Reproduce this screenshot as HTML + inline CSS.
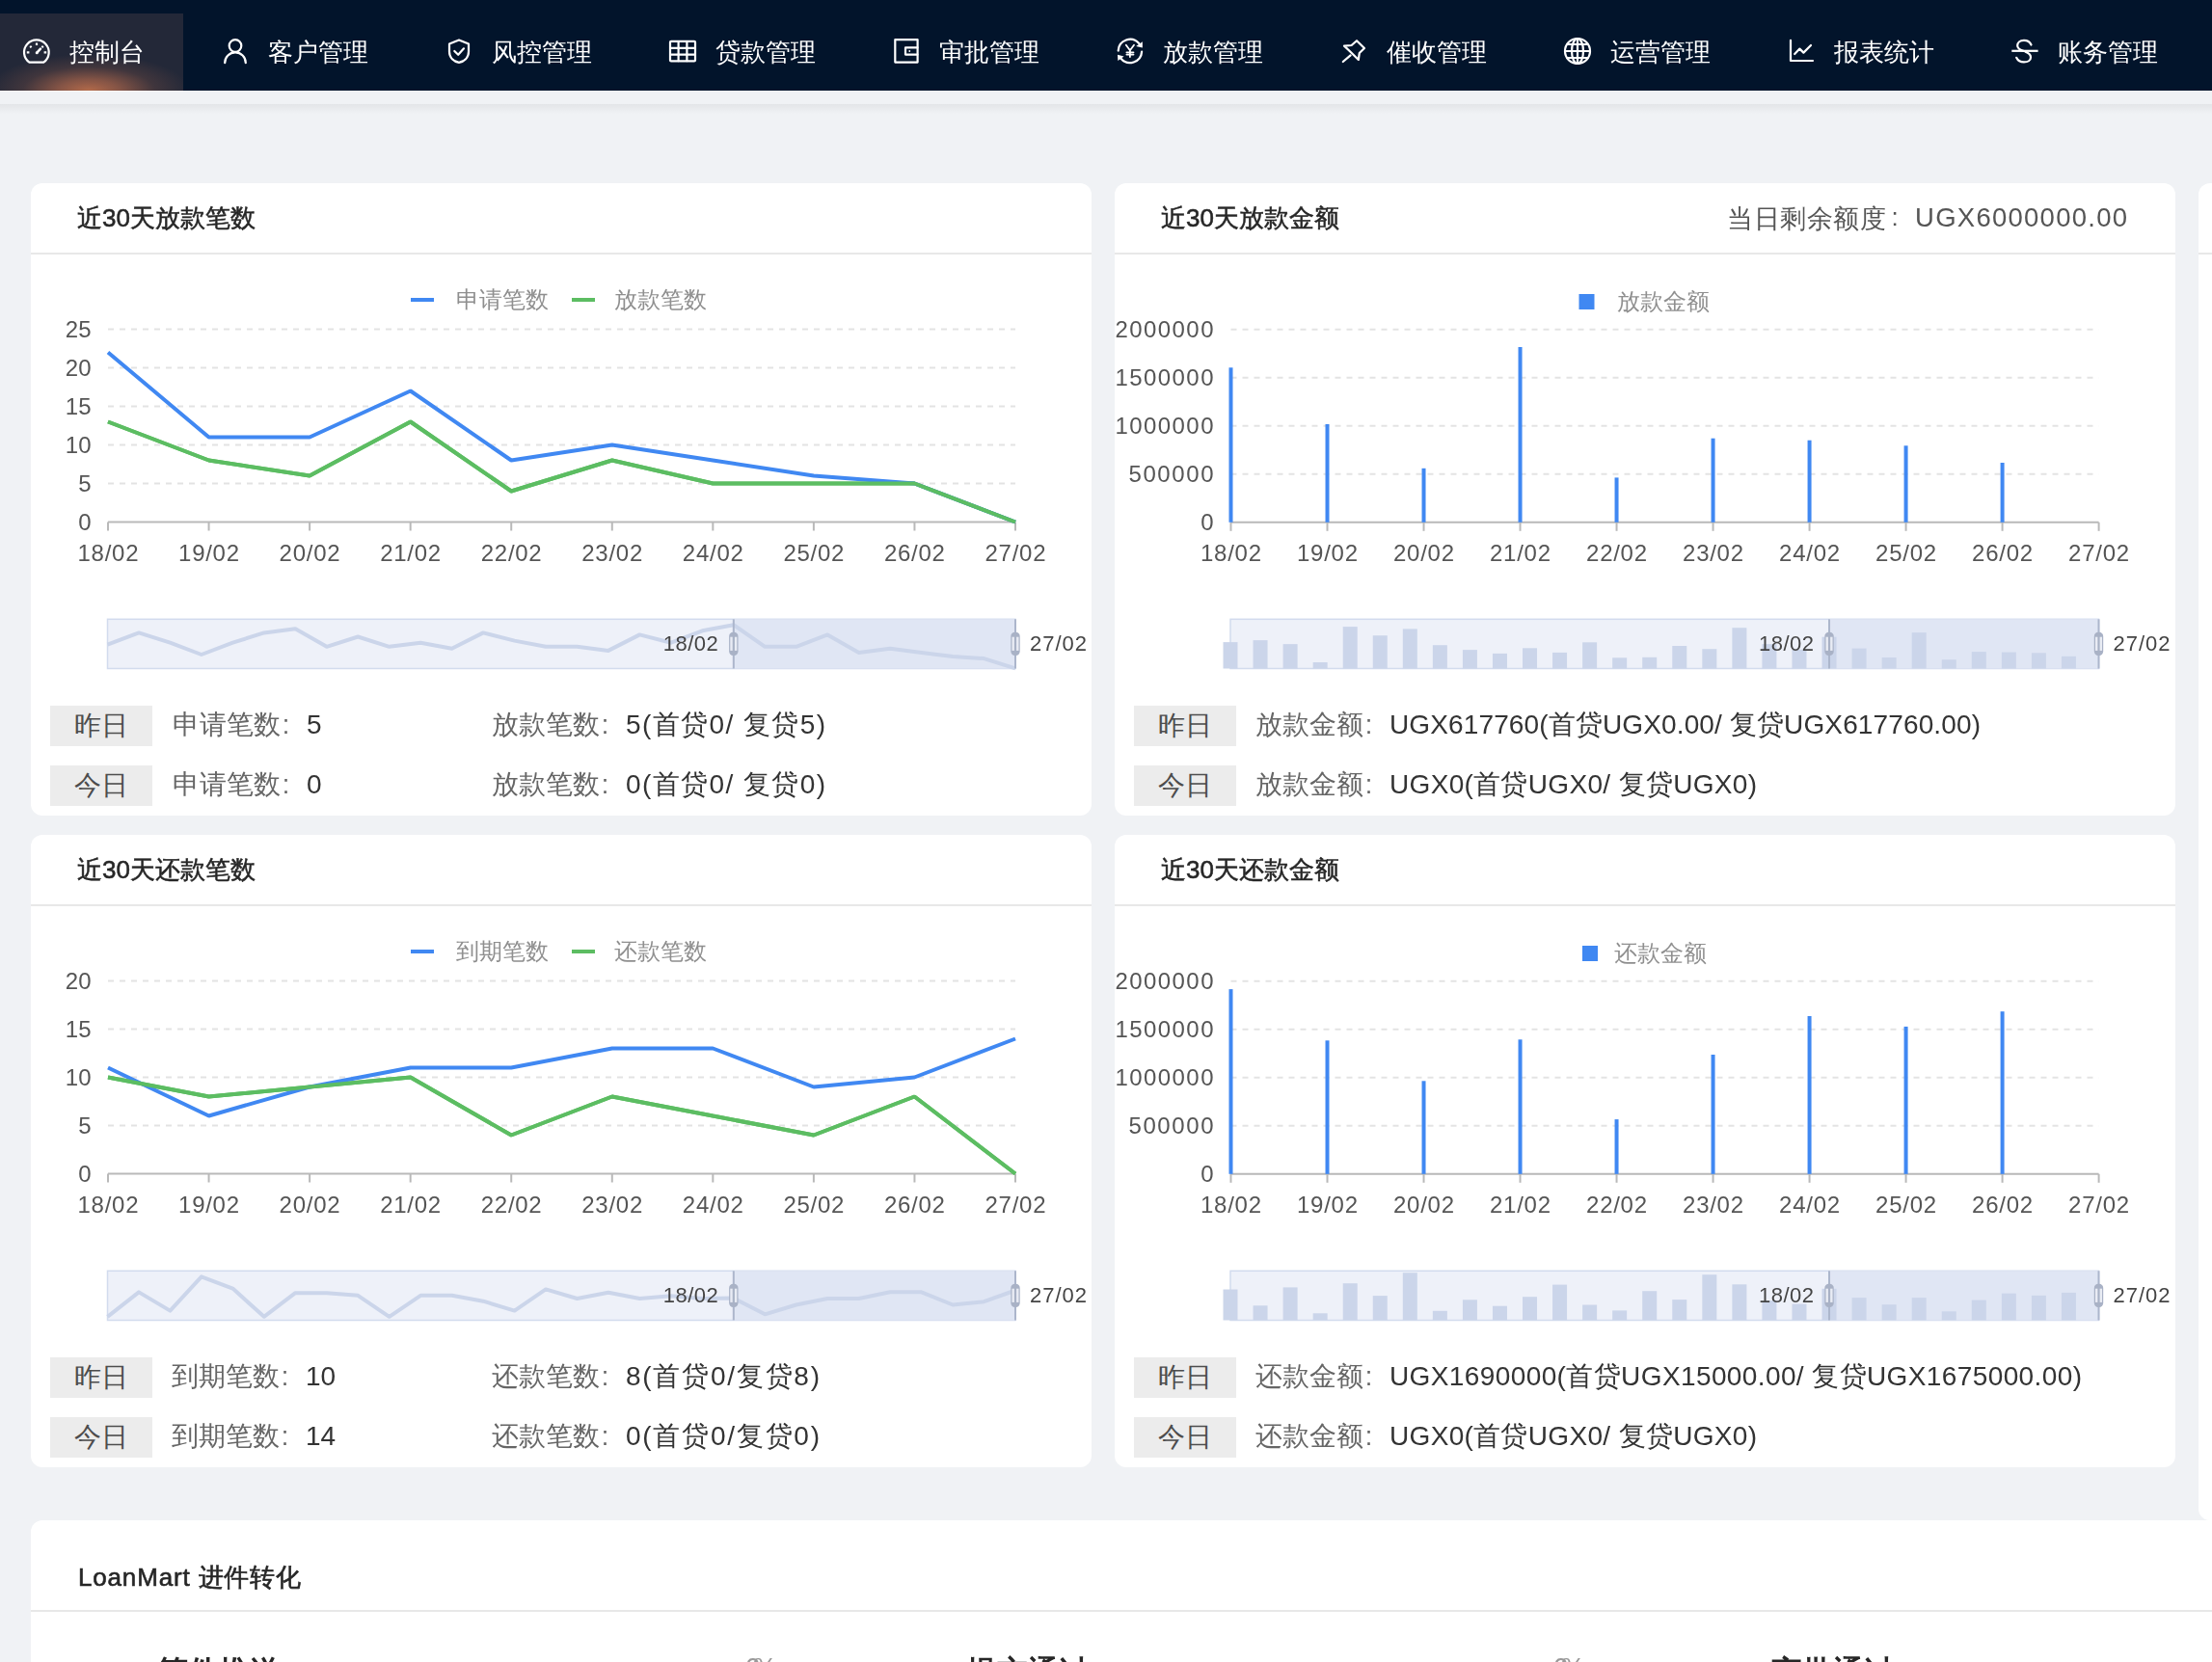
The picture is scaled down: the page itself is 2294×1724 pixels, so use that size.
<!DOCTYPE html><html><head><meta charset="utf-8"><style>
html,body{margin:0;padding:0}
body{width:2294px;height:1724px;overflow:hidden;background:#f0f2f5;position:relative;font-family:'Liberation Sans', sans-serif}
.nav{position:absolute;left:0;top:0;width:2294px;height:94px;background:#02142b}
.act{position:absolute;left:0;top:14px;width:190px;height:80px;background:radial-gradient(ellipse 105px 38px at 92px 80px, rgba(178,106,74,1) 0%, rgba(150,92,72,0.85) 30%, rgba(100,70,66,0.45) 65%, rgba(35,40,56,0) 100%), #232838}
.navline{position:absolute;left:0;top:94px;width:2294px;height:1px;background:#fafafa}
.shadow{position:absolute;left:0;top:108px;width:2294px;height:10px;background:linear-gradient(rgba(0,0,0,0.055),rgba(0,0,0,0))}
.card{position:absolute;background:#fff;border-radius:12px;overflow:hidden}
.card .hd{position:absolute;left:0;right:0;top:72px;height:2px;background:#e8e8e8}
.tag{position:absolute;width:106px;height:42px;background:#ececec;color:#4d4d4d;font-size:28px;line-height:42px;text-align:center}
svg{position:absolute;left:0;top:0;will-change:transform}
</style></head><body>
<div class="nav"></div><div class="act"></div><div class="navline"></div><div class="shadow"></div>
<div class="card" style="left:32px;top:190px;width:1100px;height:656px"><div class="hd"></div></div>
<div class="card" style="left:1156px;top:190px;width:1100px;height:656px"><div class="hd"></div></div>
<div class="card" style="left:2280px;top:190px;width:600px;height:1387px"><div class="hd"></div></div>
<div class="card" style="left:32px;top:866px;width:1100px;height:656px"><div class="hd"></div></div>
<div class="card" style="left:1156px;top:866px;width:1100px;height:656px"><div class="hd"></div></div>
<div class="card" style="left:32px;top:1577px;width:2400px;height:400px"><div class="hd" style="top:93px"></div></div>
<div class="tag" style="left:52px;top:732px">昨日</div>
<div class="tag" style="left:52px;top:794px">今日</div>
<div class="tag" style="left:1176px;top:732px">昨日</div>
<div class="tag" style="left:1176px;top:794px">今日</div>
<div class="tag" style="left:52px;top:1408px">昨日</div>
<div class="tag" style="left:52px;top:1470px">今日</div>
<div class="tag" style="left:1176px;top:1408px">昨日</div>
<div class="tag" style="left:1176px;top:1470px">今日</div>
<svg width="2294" height="1724" viewBox="0 0 2294 1724" font-family="Liberation Sans, sans-serif">
<text x="72" y="63" font-size="26" fill="#fff" text-anchor="start" font-weight="normal">控制台</text>
<text x="278" y="63" font-size="26" fill="#fff" text-anchor="start" font-weight="normal">客户管理</text>
<text x="510" y="63" font-size="26" fill="#fff" text-anchor="start" font-weight="normal">风控管理</text>
<text x="742" y="63" font-size="26" fill="#fff" text-anchor="start" font-weight="normal">贷款管理</text>
<text x="974" y="63" font-size="26" fill="#fff" text-anchor="start" font-weight="normal">审批管理</text>
<text x="1206" y="63" font-size="26" fill="#fff" text-anchor="start" font-weight="normal">放款管理</text>
<text x="1438" y="63" font-size="26" fill="#fff" text-anchor="start" font-weight="normal">催收管理</text>
<text x="1670" y="63" font-size="26" fill="#fff" text-anchor="start" font-weight="normal">运营管理</text>
<text x="1902" y="63" font-size="26" fill="#fff" text-anchor="start" font-weight="normal">报表统计</text>
<text x="2134" y="63" font-size="26" fill="#fff" text-anchor="start" font-weight="normal">账务管理</text>
<g fill="none" stroke="#fff" stroke-width="2.2" stroke-linecap="round" stroke-linejoin="round"><path d="M30.4 64.7 L45.3 64.7 A12.85 12.85 0 1 0 30.4 64.7 Z"/><path d="M38 44.4v2.6M27.8 54.3h2.6M45.6 54.3h2.6M31.2 47.9l1.4 1.4M44.8 47.9l-1.4 1.4" stroke-linecap="butt"/><path d="M38.3 54.6 L42 50.6" stroke-width="2.5"/><circle cx="38.2" cy="54.7" r="1.5" fill="#fff" stroke="none"/></g>
<g fill="none" stroke="#fff" stroke-width="2.2" stroke-linecap="round" stroke-linejoin="round"><circle cx="244" cy="47.5" r="6.3"/><path d="M233.2 65.2 A10.8 10.8 0 0 1 254.8 65.2"/></g>
<g fill="none" stroke="#fff" stroke-width="2.2" stroke-linecap="round" stroke-linejoin="round"><path d="M476 41.5 L486 45.6 V53.5 C486 59.8 481.5 63.8 476 64.8 C470.5 63.8 466 59.8 466 53.5 V45.6 Z"/><path d="M471.3 53 L475.2 56.8 L481 50.3"/></g>
<g fill="none" stroke="#fff" stroke-width="2.2" stroke-linecap="round" stroke-linejoin="round" stroke-width="2.1"><rect x="695" y="42.8" width="26" height="20.6" rx="1"/><path d="M703.6 43v20.2M712.4 43v20.2M695.2 49.8h25.6M695.2 56.6h25.6"/></g>
<g fill="none" stroke="#fff" stroke-width="2.2" stroke-linecap="round" stroke-linejoin="round" stroke-width="2.2"><path d="M928.3 41.2 H951.6 V64.6 H928.3 Z"/><path d="M951.4 49.4 H939 V56.6 H951.4"/><circle cx="943.3" cy="53" r="0.9" fill="#fff" stroke="none"/></g>
<g fill="none" stroke="#fff" stroke-width="2.2" stroke-linecap="round" stroke-linejoin="round" stroke-width="2.3" stroke-linecap="butt"><path d="M1159.7 52.6 A12.3 12.3 0 0 1 1181.2 45"/><path d="M1184.1 53.6 A12.3 12.3 0 0 1 1162.5 60.8"/><path d="M1167.8 46.8 L1171.9 52.2 L1176 46.8 M1171.9 52.2 V59 M1168.4 54.3 H1175.5 M1168.4 56.6 H1175.5" stroke-width="1.8"/></g>
<polygon points="1184.8,43.2 1184.8,49.4 1178.2,47.9" fill="#fff"/>
<polygon points="1159.0,56.8 1159.4,63.0 1165.6,58.4" fill="#fff"/>
<g fill="none" stroke="#fff" stroke-width="2.2" stroke-linecap="round" stroke-linejoin="round" stroke-width="2.2"><path d="M1407 42.2 L1415 50 L1409.8 55 L1408.8 62 L1401 54.2 L1394 47.6 L1401.6 47 Z"/><path d="M1400.6 57.4 L1392.8 64"/></g>
<g fill="none" stroke="#fff" stroke-width="2.2" stroke-linecap="round" stroke-linejoin="round" stroke-width="2"><circle cx="1636" cy="53" r="13"/><ellipse cx="1636" cy="53" rx="6" ry="13"/><path d="M1636 40v26M1623 53h26M1625.2 46h21.6M1625.2 60h21.6"/></g>
<g fill="none" stroke="#fff" stroke-width="2.2" stroke-linecap="round" stroke-linejoin="round" stroke-width="2.2" stroke-linecap="butt"><path d="M1857 41.8 V63 H1880"/><path d="M1861.2 56 L1866.4 50.6 L1870.4 54.6 L1878 47"/></g>
<g fill="none" stroke="#fff" stroke-width="2.2" stroke-linecap="round" stroke-linejoin="round" stroke-width="2.2"><path d="M2106.5 46.5 C2105 43 2102 41.8 2099 41.8 C2094.5 41.8 2092.2 44.5 2092.2 47.3 C2092.2 50.5 2095 52 2099 53"/><path d="M2100.5 53.8 C2104 55 2106 56.8 2106 59.4 C2106 62.6 2103 64.4 2099 64.4 C2095.5 64.4 2092.5 62.6 2091.2 59.8"/><path d="M2086.3 52.8 H2113.6" stroke-linecap="butt"/></g>
<text x="80" y="235" font-size="26" fill="#262626" text-anchor="start" font-weight="normal" stroke="#262626" stroke-width="0.5">近30天放款笔数</text>
<text x="1204" y="235" font-size="26" fill="#262626" text-anchor="start" font-weight="normal" stroke="#262626" stroke-width="0.5">近30天放款金额</text>
<text x="80" y="911" font-size="26" fill="#262626" text-anchor="start" font-weight="normal" stroke="#262626" stroke-width="0.5">近30天还款笔数</text>
<text x="1204" y="911" font-size="26" fill="#262626" text-anchor="start" font-weight="normal" stroke="#262626" stroke-width="0.5">近30天还款金额</text>
<text x="1791" y="235.5" font-size="26.5" fill="#555" text-anchor="start" font-weight="normal" textLength="165" lengthAdjust="spacing">当日剩余额度</text>
<text x="1965" y="234" font-size="26" fill="#555" text-anchor="middle" font-weight="normal">:</text>
<text x="1986" y="235" font-size="27.5" fill="#555" text-anchor="start" font-weight="normal" textLength="220" lengthAdjust="spacing">UGX6000000.00</text>
<line x1="112" y1="501.5" x2="1053" y2="501.5" stroke="#e3e3e3" stroke-width="2" stroke-dasharray="6 6"/>
<line x1="112" y1="461.5" x2="1053" y2="461.5" stroke="#e3e3e3" stroke-width="2" stroke-dasharray="6 6"/>
<line x1="112" y1="421.5" x2="1053" y2="421.5" stroke="#e3e3e3" stroke-width="2" stroke-dasharray="6 6"/>
<line x1="112" y1="381.5" x2="1053" y2="381.5" stroke="#e3e3e3" stroke-width="2" stroke-dasharray="6 6"/>
<line x1="112" y1="341.5" x2="1053" y2="341.5" stroke="#e3e3e3" stroke-width="2" stroke-dasharray="6 6"/>
<line x1="112" y1="541.5" x2="1053" y2="541.5" stroke="#b9b9b9" stroke-width="2"/>
<line x1="112.0" y1="541.5" x2="112.0" y2="550.5" stroke="#b9b9b9" stroke-width="2"/>
<line x1="216.55555555555554" y1="541.5" x2="216.55555555555554" y2="550.5" stroke="#b9b9b9" stroke-width="2"/>
<line x1="321.1111111111111" y1="541.5" x2="321.1111111111111" y2="550.5" stroke="#b9b9b9" stroke-width="2"/>
<line x1="425.6666666666667" y1="541.5" x2="425.6666666666667" y2="550.5" stroke="#b9b9b9" stroke-width="2"/>
<line x1="530.2222222222222" y1="541.5" x2="530.2222222222222" y2="550.5" stroke="#b9b9b9" stroke-width="2"/>
<line x1="634.7777777777778" y1="541.5" x2="634.7777777777778" y2="550.5" stroke="#b9b9b9" stroke-width="2"/>
<line x1="739.3333333333334" y1="541.5" x2="739.3333333333334" y2="550.5" stroke="#b9b9b9" stroke-width="2"/>
<line x1="843.8888888888889" y1="541.5" x2="843.8888888888889" y2="550.5" stroke="#b9b9b9" stroke-width="2"/>
<line x1="948.4444444444445" y1="541.5" x2="948.4444444444445" y2="550.5" stroke="#b9b9b9" stroke-width="2"/>
<line x1="1053.0" y1="541.5" x2="1053.0" y2="550.5" stroke="#b9b9b9" stroke-width="2"/>
<text x="94.5" y="549.5" font-size="24" fill="#555" text-anchor="end" font-weight="normal">0</text>
<text x="94.5" y="509.5" font-size="24" fill="#555" text-anchor="end" font-weight="normal">5</text>
<text x="94.5" y="469.5" font-size="24" fill="#555" text-anchor="end" font-weight="normal">10</text>
<text x="94.5" y="429.5" font-size="24" fill="#555" text-anchor="end" font-weight="normal">15</text>
<text x="94.5" y="389.5" font-size="24" fill="#555" text-anchor="end" font-weight="normal">20</text>
<text x="94.5" y="349.5" font-size="24" fill="#555" text-anchor="end" font-weight="normal">25</text>
<text x="112.0" y="582.0" font-size="24" fill="#555" text-anchor="middle" font-weight="normal" textLength="63" lengthAdjust="spacing">18/02</text>
<text x="216.55555555555554" y="582.0" font-size="24" fill="#555" text-anchor="middle" font-weight="normal" textLength="63" lengthAdjust="spacing">19/02</text>
<text x="321.1111111111111" y="582.0" font-size="24" fill="#555" text-anchor="middle" font-weight="normal" textLength="63" lengthAdjust="spacing">20/02</text>
<text x="425.6666666666667" y="582.0" font-size="24" fill="#555" text-anchor="middle" font-weight="normal" textLength="63" lengthAdjust="spacing">21/02</text>
<text x="530.2222222222222" y="582.0" font-size="24" fill="#555" text-anchor="middle" font-weight="normal" textLength="63" lengthAdjust="spacing">22/02</text>
<text x="634.7777777777778" y="582.0" font-size="24" fill="#555" text-anchor="middle" font-weight="normal" textLength="63" lengthAdjust="spacing">23/02</text>
<text x="739.3333333333334" y="582.0" font-size="24" fill="#555" text-anchor="middle" font-weight="normal" textLength="63" lengthAdjust="spacing">24/02</text>
<text x="843.8888888888889" y="582.0" font-size="24" fill="#555" text-anchor="middle" font-weight="normal" textLength="63" lengthAdjust="spacing">25/02</text>
<text x="948.4444444444445" y="582.0" font-size="24" fill="#555" text-anchor="middle" font-weight="normal" textLength="63" lengthAdjust="spacing">26/02</text>
<text x="1053.0" y="582.0" font-size="24" fill="#555" text-anchor="middle" font-weight="normal" textLength="63" lengthAdjust="spacing">27/02</text>
<polyline points="112.0,437.5 216.6,477.5 321.1,493.5 425.7,437.5 530.2,509.5 634.8,477.5 739.3,501.5 843.9,501.5 948.4,501.5 1053.0,541.5" fill="none" stroke="#5cbd62" stroke-width="4" stroke-linejoin="bevel"/>
<polyline points="112.0,365.5 216.6,453.5 321.1,453.5 425.7,405.5 530.2,477.5 634.8,461.5 739.3,477.5 843.9,493.5 948.4,501.5 1053.0,541.5" fill="none" stroke="#4088f2" stroke-width="4" stroke-linejoin="bevel"/>
<polyline points="112.0,437.5 216.6,477.5 321.1,493.5 425.7,437.5 530.2,509.5 634.8,477.5 739.3,501.5 843.9,501.5 948.4,501.5 1053.0,541.5" fill="none" stroke="#5cbd62" stroke-width="4" stroke-linejoin="bevel"/>
<rect x="426" y="309" width="24" height="4" fill="#4088f2"/>
<text x="473" y="319" font-size="23.5" fill="#8f8f8f" text-anchor="start" font-weight="normal">申请笔数</text>
<rect x="593" y="309" width="24" height="4" fill="#5cbd62"/>
<text x="637" y="319" font-size="23.5" fill="#8f8f8f" text-anchor="start" font-weight="normal">放款笔数</text>
<rect x="111.5" y="642.3" width="941.5" height="51.200000000000045" fill="#eef1f9" stroke="#d2dbee" stroke-width="1.5"/>
<rect x="760.8103448275862" y="642.3" width="292.18965517241384" height="51.200000000000045" fill="#e0e6f4"/>
<polyline points="111.5,668.7 144.0,656.4 176.4,666.7 208.9,679.0 241.4,666.7 273.8,656.4 306.3,652.3 338.8,670.8 371.2,660.5 403.7,670.8 436.2,666.7 468.6,672.8 501.1,656.4 533.6,664.6 566.0,670.8 598.5,670.8 630.9,674.9 663.4,658.4 695.9,666.7 728.3,654.3 760.8,648.2 793.3,670.8 825.7,670.8 858.2,658.4 890.7,677.0 923.1,672.8 955.6,677.0 988.1,681.1 1020.5,683.1 1053.0,693.4" fill="none" stroke="#cbd5ea" stroke-width="4" stroke-linejoin="round"/>
<line x1="760.8103448275862" y1="642.3" x2="760.8103448275862" y2="693.5" stroke="#acb6cc" stroke-width="2"/>
<rect x="756.1103448275861" y="655.6999999999999" width="9.4" height="24.2" rx="4.2" fill="#a9b2c6"/>
<rect x="757.3103448275862" y="660.6999999999999" width="2.4" height="14.2" fill="#e9ecf4"/>
<rect x="761.9103448275862" y="660.6999999999999" width="2.4" height="14.2" fill="#e9ecf4"/>
<line x1="1053" y1="642.3" x2="1053" y2="693.5" stroke="#acb6cc" stroke-width="2"/>
<rect x="1048.3" y="655.6999999999999" width="9.4" height="24.2" rx="4.2" fill="#a9b2c6"/>
<rect x="1049.5" y="660.6999999999999" width="2.4" height="14.2" fill="#e9ecf4"/>
<rect x="1054.1" y="660.6999999999999" width="2.4" height="14.2" fill="#e9ecf4"/>
<text x="744.8103448275862" y="675.4" font-size="22" fill="#444" text-anchor="end" font-weight="normal" textLength="57" lengthAdjust="spacing">18/02</text>
<text x="1068" y="675.4" font-size="22" fill="#444" text-anchor="start" font-weight="normal" textLength="59" lengthAdjust="spacing">27/02</text>
<line x1="112" y1="1167.5" x2="1053" y2="1167.5" stroke="#e3e3e3" stroke-width="2" stroke-dasharray="6 6"/>
<line x1="112" y1="1117.5" x2="1053" y2="1117.5" stroke="#e3e3e3" stroke-width="2" stroke-dasharray="6 6"/>
<line x1="112" y1="1067.5" x2="1053" y2="1067.5" stroke="#e3e3e3" stroke-width="2" stroke-dasharray="6 6"/>
<line x1="112" y1="1017.5" x2="1053" y2="1017.5" stroke="#e3e3e3" stroke-width="2" stroke-dasharray="6 6"/>
<line x1="112" y1="1217.5" x2="1053" y2="1217.5" stroke="#b9b9b9" stroke-width="2"/>
<line x1="112.0" y1="1217.5" x2="112.0" y2="1226.5" stroke="#b9b9b9" stroke-width="2"/>
<line x1="216.55555555555554" y1="1217.5" x2="216.55555555555554" y2="1226.5" stroke="#b9b9b9" stroke-width="2"/>
<line x1="321.1111111111111" y1="1217.5" x2="321.1111111111111" y2="1226.5" stroke="#b9b9b9" stroke-width="2"/>
<line x1="425.6666666666667" y1="1217.5" x2="425.6666666666667" y2="1226.5" stroke="#b9b9b9" stroke-width="2"/>
<line x1="530.2222222222222" y1="1217.5" x2="530.2222222222222" y2="1226.5" stroke="#b9b9b9" stroke-width="2"/>
<line x1="634.7777777777778" y1="1217.5" x2="634.7777777777778" y2="1226.5" stroke="#b9b9b9" stroke-width="2"/>
<line x1="739.3333333333334" y1="1217.5" x2="739.3333333333334" y2="1226.5" stroke="#b9b9b9" stroke-width="2"/>
<line x1="843.8888888888889" y1="1217.5" x2="843.8888888888889" y2="1226.5" stroke="#b9b9b9" stroke-width="2"/>
<line x1="948.4444444444445" y1="1217.5" x2="948.4444444444445" y2="1226.5" stroke="#b9b9b9" stroke-width="2"/>
<line x1="1053.0" y1="1217.5" x2="1053.0" y2="1226.5" stroke="#b9b9b9" stroke-width="2"/>
<text x="94.5" y="1225.5" font-size="24" fill="#555" text-anchor="end" font-weight="normal">0</text>
<text x="94.5" y="1175.5" font-size="24" fill="#555" text-anchor="end" font-weight="normal">5</text>
<text x="94.5" y="1125.5" font-size="24" fill="#555" text-anchor="end" font-weight="normal">10</text>
<text x="94.5" y="1075.5" font-size="24" fill="#555" text-anchor="end" font-weight="normal">15</text>
<text x="94.5" y="1025.5" font-size="24" fill="#555" text-anchor="end" font-weight="normal">20</text>
<text x="112.0" y="1258.0" font-size="24" fill="#555" text-anchor="middle" font-weight="normal" textLength="63" lengthAdjust="spacing">18/02</text>
<text x="216.55555555555554" y="1258.0" font-size="24" fill="#555" text-anchor="middle" font-weight="normal" textLength="63" lengthAdjust="spacing">19/02</text>
<text x="321.1111111111111" y="1258.0" font-size="24" fill="#555" text-anchor="middle" font-weight="normal" textLength="63" lengthAdjust="spacing">20/02</text>
<text x="425.6666666666667" y="1258.0" font-size="24" fill="#555" text-anchor="middle" font-weight="normal" textLength="63" lengthAdjust="spacing">21/02</text>
<text x="530.2222222222222" y="1258.0" font-size="24" fill="#555" text-anchor="middle" font-weight="normal" textLength="63" lengthAdjust="spacing">22/02</text>
<text x="634.7777777777778" y="1258.0" font-size="24" fill="#555" text-anchor="middle" font-weight="normal" textLength="63" lengthAdjust="spacing">23/02</text>
<text x="739.3333333333334" y="1258.0" font-size="24" fill="#555" text-anchor="middle" font-weight="normal" textLength="63" lengthAdjust="spacing">24/02</text>
<text x="843.8888888888889" y="1258.0" font-size="24" fill="#555" text-anchor="middle" font-weight="normal" textLength="63" lengthAdjust="spacing">25/02</text>
<text x="948.4444444444445" y="1258.0" font-size="24" fill="#555" text-anchor="middle" font-weight="normal" textLength="63" lengthAdjust="spacing">26/02</text>
<text x="1053.0" y="1258.0" font-size="24" fill="#555" text-anchor="middle" font-weight="normal" textLength="63" lengthAdjust="spacing">27/02</text>
<polyline points="112.0,1117.5 216.6,1137.5 321.1,1127.5 425.7,1117.5 530.2,1177.5 634.8,1137.5 739.3,1157.5 843.9,1177.5 948.4,1137.5 1053.0,1217.5" fill="none" stroke="#5cbd62" stroke-width="4" stroke-linejoin="bevel"/>
<polyline points="112.0,1107.5 216.6,1157.5 321.1,1127.5 425.7,1107.5 530.2,1107.5 634.8,1087.5 739.3,1087.5 843.9,1127.5 948.4,1117.5 1053.0,1077.5" fill="none" stroke="#4088f2" stroke-width="4" stroke-linejoin="bevel"/>
<polyline points="112.0,1117.5 216.6,1137.5 321.1,1127.5 425.7,1117.5 530.2,1177.5 634.8,1137.5 739.3,1157.5 843.9,1177.5 948.4,1137.5 1053.0,1217.5" fill="none" stroke="#5cbd62" stroke-width="4" stroke-linejoin="bevel"/>
<rect x="426" y="985" width="24" height="4" fill="#4088f2"/>
<text x="473" y="995" font-size="23.5" fill="#8f8f8f" text-anchor="start" font-weight="normal">到期笔数</text>
<rect x="593" y="985" width="24" height="4" fill="#5cbd62"/>
<text x="637" y="995" font-size="23.5" fill="#8f8f8f" text-anchor="start" font-weight="normal">还款笔数</text>
<rect x="111.5" y="1318.3" width="941.5" height="51.200000000000045" fill="#eef1f9" stroke="#d2dbee" stroke-width="1.5"/>
<rect x="760.8103448275862" y="1318.3" width="292.18965517241384" height="51.200000000000045" fill="#e0e6f4"/>
<polyline points="111.5,1365.8 144.0,1340.4 176.4,1359.6 208.9,1324.3 241.4,1336.6 273.8,1365.8 306.3,1341.2 338.8,1341.2 371.2,1343.8 403.7,1365.8 436.2,1343.8 468.6,1343.8 501.1,1349.7 533.6,1359.6 566.0,1337.4 598.5,1347.0 630.9,1340.7 663.4,1347.0 695.9,1344.3 728.3,1347.0 760.8,1346.6 793.3,1363.3 825.7,1353.5 858.2,1347.0 890.7,1347.0 923.1,1340.3 955.6,1340.3 988.1,1353.5 1020.5,1350.2 1053.0,1338.5" fill="none" stroke="#cbd5ea" stroke-width="4" stroke-linejoin="round"/>
<line x1="760.8103448275862" y1="1318.3" x2="760.8103448275862" y2="1369.5" stroke="#acb6cc" stroke-width="2"/>
<rect x="756.1103448275861" y="1331.7" width="9.4" height="24.2" rx="4.2" fill="#a9b2c6"/>
<rect x="757.3103448275862" y="1336.7" width="2.4" height="14.2" fill="#e9ecf4"/>
<rect x="761.9103448275862" y="1336.7" width="2.4" height="14.2" fill="#e9ecf4"/>
<line x1="1053" y1="1318.3" x2="1053" y2="1369.5" stroke="#acb6cc" stroke-width="2"/>
<rect x="1048.3" y="1331.7" width="9.4" height="24.2" rx="4.2" fill="#a9b2c6"/>
<rect x="1049.5" y="1336.7" width="2.4" height="14.2" fill="#e9ecf4"/>
<rect x="1054.1" y="1336.7" width="2.4" height="14.2" fill="#e9ecf4"/>
<text x="744.8103448275862" y="1351.4" font-size="22" fill="#444" text-anchor="end" font-weight="normal" textLength="57" lengthAdjust="spacing">18/02</text>
<text x="1068" y="1351.4" font-size="22" fill="#444" text-anchor="start" font-weight="normal" textLength="59" lengthAdjust="spacing">27/02</text>
<line x1="1276.5" y1="491.79999999999995" x2="2176.6" y2="491.79999999999995" stroke="#e3e3e3" stroke-width="2" stroke-dasharray="6 6"/>
<line x1="1276.5" y1="441.79999999999995" x2="2176.6" y2="441.79999999999995" stroke="#e3e3e3" stroke-width="2" stroke-dasharray="6 6"/>
<line x1="1276.5" y1="391.79999999999995" x2="2176.6" y2="391.79999999999995" stroke="#e3e3e3" stroke-width="2" stroke-dasharray="6 6"/>
<line x1="1276.5" y1="341.79999999999995" x2="2176.6" y2="341.79999999999995" stroke="#e3e3e3" stroke-width="2" stroke-dasharray="6 6"/>
<line x1="1276.5" y1="541.8" x2="2176.6" y2="541.8" stroke="#b9b9b9" stroke-width="2"/>
<line x1="1276.5" y1="541.8" x2="1276.5" y2="550.8" stroke="#b9b9b9" stroke-width="2"/>
<line x1="1376.5111111111112" y1="541.8" x2="1376.5111111111112" y2="550.8" stroke="#b9b9b9" stroke-width="2"/>
<line x1="1476.5222222222221" y1="541.8" x2="1476.5222222222221" y2="550.8" stroke="#b9b9b9" stroke-width="2"/>
<line x1="1576.5333333333333" y1="541.8" x2="1576.5333333333333" y2="550.8" stroke="#b9b9b9" stroke-width="2"/>
<line x1="1676.5444444444445" y1="541.8" x2="1676.5444444444445" y2="550.8" stroke="#b9b9b9" stroke-width="2"/>
<line x1="1776.5555555555557" y1="541.8" x2="1776.5555555555557" y2="550.8" stroke="#b9b9b9" stroke-width="2"/>
<line x1="1876.5666666666666" y1="541.8" x2="1876.5666666666666" y2="550.8" stroke="#b9b9b9" stroke-width="2"/>
<line x1="1976.5777777777776" y1="541.8" x2="1976.5777777777776" y2="550.8" stroke="#b9b9b9" stroke-width="2"/>
<line x1="2076.588888888889" y1="541.8" x2="2076.588888888889" y2="550.8" stroke="#b9b9b9" stroke-width="2"/>
<line x1="2176.6" y1="541.8" x2="2176.6" y2="550.8" stroke="#b9b9b9" stroke-width="2"/>
<text x="1258.5" y="549.8" font-size="24" fill="#555" text-anchor="end" font-weight="normal">0</text>
<text x="1258.5" y="499.79999999999995" font-size="24" fill="#555" text-anchor="end" font-weight="normal" textLength="88" lengthAdjust="spacing">500000</text>
<text x="1258.5" y="449.79999999999995" font-size="24" fill="#555" text-anchor="end" font-weight="normal" textLength="102" lengthAdjust="spacing">1000000</text>
<text x="1258.5" y="399.79999999999995" font-size="24" fill="#555" text-anchor="end" font-weight="normal" textLength="102" lengthAdjust="spacing">1500000</text>
<text x="1258.5" y="349.79999999999995" font-size="24" fill="#555" text-anchor="end" font-weight="normal" textLength="102" lengthAdjust="spacing">2000000</text>
<text x="1276.5" y="582.3" font-size="24" fill="#555" text-anchor="middle" font-weight="normal" textLength="63" lengthAdjust="spacing">18/02</text>
<text x="1376.5111111111112" y="582.3" font-size="24" fill="#555" text-anchor="middle" font-weight="normal" textLength="63" lengthAdjust="spacing">19/02</text>
<text x="1476.5222222222221" y="582.3" font-size="24" fill="#555" text-anchor="middle" font-weight="normal" textLength="63" lengthAdjust="spacing">20/02</text>
<text x="1576.5333333333333" y="582.3" font-size="24" fill="#555" text-anchor="middle" font-weight="normal" textLength="63" lengthAdjust="spacing">21/02</text>
<text x="1676.5444444444445" y="582.3" font-size="24" fill="#555" text-anchor="middle" font-weight="normal" textLength="63" lengthAdjust="spacing">22/02</text>
<text x="1776.5555555555557" y="582.3" font-size="24" fill="#555" text-anchor="middle" font-weight="normal" textLength="63" lengthAdjust="spacing">23/02</text>
<text x="1876.5666666666666" y="582.3" font-size="24" fill="#555" text-anchor="middle" font-weight="normal" textLength="63" lengthAdjust="spacing">24/02</text>
<text x="1976.5777777777776" y="582.3" font-size="24" fill="#555" text-anchor="middle" font-weight="normal" textLength="63" lengthAdjust="spacing">25/02</text>
<text x="2076.588888888889" y="582.3" font-size="24" fill="#555" text-anchor="middle" font-weight="normal" textLength="63" lengthAdjust="spacing">26/02</text>
<text x="2176.6" y="582.3" font-size="24" fill="#555" text-anchor="middle" font-weight="normal" textLength="63" lengthAdjust="spacing">27/02</text>
<rect x="1274.5" y="381.29999999999995" width="4" height="160.5" fill="#4088f2"/>
<rect x="1374.5111111111112" y="439.99999999999994" width="4" height="101.8" fill="#4088f2"/>
<rect x="1474.5222222222221" y="485.79999999999995" width="4" height="56.00000000000001" fill="#4088f2"/>
<rect x="1574.5333333333333" y="359.99999999999994" width="4" height="181.8" fill="#4088f2"/>
<rect x="1674.5444444444445" y="495.4" width="4" height="46.400000000000006" fill="#4088f2"/>
<rect x="1774.5555555555557" y="454.69999999999993" width="4" height="87.1" fill="#4088f2"/>
<rect x="1874.5666666666666" y="456.69999999999993" width="4" height="85.1" fill="#4088f2"/>
<rect x="1974.5777777777776" y="462.29999999999995" width="4" height="79.5" fill="#4088f2"/>
<rect x="2074.588888888889" y="479.99999999999994" width="4" height="61.8" fill="#4088f2"/>
<rect x="1637.5" y="305" width="16" height="16" fill="#4088f2"/>
<text x="1677" y="321" font-size="23.5" fill="#8f8f8f" text-anchor="start" font-weight="normal">放款金额</text>
<rect x="1276" y="642.3" width="900.5" height="51.200000000000045" fill="#eef1f9" stroke="#d2dbee" stroke-width="1.5"/>
<rect x="1897.0344827586207" y="642.3" width="279.4655172413793" height="51.200000000000045" fill="#e0e6f4"/>
<rect x="1268.5" y="666.1" width="15" height="27.4" fill="#cbd5ea"/>
<rect x="1299.551724137931" y="664.1" width="15" height="29.4" fill="#cbd5ea"/>
<rect x="1330.603448275862" y="668.1" width="15" height="25.4" fill="#cbd5ea"/>
<rect x="1361.655172413793" y="687.0" width="15" height="6.5" fill="#cbd5ea"/>
<rect x="1392.7068965517242" y="650.1" width="15" height="43.4" fill="#cbd5ea"/>
<rect x="1423.7586206896551" y="659.2" width="15" height="34.3" fill="#cbd5ea"/>
<rect x="1454.8103448275863" y="652.4" width="15" height="41.1" fill="#cbd5ea"/>
<rect x="1485.8620689655172" y="669.2" width="15" height="24.3" fill="#cbd5ea"/>
<rect x="1516.9137931034484" y="674.1" width="15" height="19.4" fill="#cbd5ea"/>
<rect x="1547.9655172413793" y="677.9" width="15" height="15.6" fill="#cbd5ea"/>
<rect x="1579.0172413793102" y="672.3" width="15" height="21.2" fill="#cbd5ea"/>
<rect x="1610.0689655172414" y="676.9" width="15" height="16.6" fill="#cbd5ea"/>
<rect x="1641.1206896551726" y="666.3" width="15" height="27.2" fill="#cbd5ea"/>
<rect x="1672.1724137931035" y="682.3" width="15" height="11.2" fill="#cbd5ea"/>
<rect x="1703.2241379310344" y="681.8" width="15" height="11.7" fill="#cbd5ea"/>
<rect x="1734.2758620689656" y="670.0" width="15" height="23.5" fill="#cbd5ea"/>
<rect x="1765.3275862068965" y="673.2" width="15" height="20.3" fill="#cbd5ea"/>
<rect x="1796.3793103448274" y="651.2" width="15" height="42.3" fill="#cbd5ea"/>
<rect x="1827.4310344827586" y="668.1" width="15" height="25.4" fill="#cbd5ea"/>
<rect x="1858.4827586206898" y="673.8" width="15" height="19.7" fill="#cbd5ea"/>
<rect x="1889.5344827586207" y="660.7" width="15" height="32.8" fill="#cbd5ea"/>
<rect x="1920.5862068965516" y="672.6" width="15" height="20.9" fill="#cbd5ea"/>
<rect x="1951.6379310344828" y="682.0" width="15" height="11.5" fill="#cbd5ea"/>
<rect x="1982.689655172414" y="656.1" width="15" height="37.4" fill="#cbd5ea"/>
<rect x="2013.7413793103449" y="684.2" width="15" height="9.3" fill="#cbd5ea"/>
<rect x="2044.7931034482758" y="676.1" width="15" height="17.4" fill="#cbd5ea"/>
<rect x="2075.844827586207" y="676.5" width="15" height="17.0" fill="#cbd5ea"/>
<rect x="2106.8965517241377" y="677.3" width="15" height="16.2" fill="#cbd5ea"/>
<rect x="2137.948275862069" y="680.8" width="15" height="12.7" fill="#cbd5ea"/>
<line x1="1897.0344827586207" y1="642.3" x2="1897.0344827586207" y2="693.5" stroke="#acb6cc" stroke-width="2"/>
<rect x="1892.3344827586207" y="655.6999999999999" width="9.4" height="24.2" rx="4.2" fill="#a9b2c6"/>
<rect x="1893.5344827586207" y="660.6999999999999" width="2.4" height="14.2" fill="#e9ecf4"/>
<rect x="1898.1344827586206" y="660.6999999999999" width="2.4" height="14.2" fill="#e9ecf4"/>
<line x1="2176.5" y1="642.3" x2="2176.5" y2="693.5" stroke="#acb6cc" stroke-width="2"/>
<rect x="2171.8" y="655.6999999999999" width="9.4" height="24.2" rx="4.2" fill="#a9b2c6"/>
<rect x="2173.0" y="660.6999999999999" width="2.4" height="14.2" fill="#e9ecf4"/>
<rect x="2177.6" y="660.6999999999999" width="2.4" height="14.2" fill="#e9ecf4"/>
<text x="1881.0344827586207" y="675.4" font-size="22" fill="#444" text-anchor="end" font-weight="normal" textLength="57" lengthAdjust="spacing">18/02</text>
<text x="2191.5" y="675.4" font-size="22" fill="#444" text-anchor="start" font-weight="normal" textLength="59" lengthAdjust="spacing">27/02</text>
<line x1="1276.5" y1="1167.8" x2="2176.6" y2="1167.8" stroke="#e3e3e3" stroke-width="2" stroke-dasharray="6 6"/>
<line x1="1276.5" y1="1117.8" x2="2176.6" y2="1117.8" stroke="#e3e3e3" stroke-width="2" stroke-dasharray="6 6"/>
<line x1="1276.5" y1="1067.8" x2="2176.6" y2="1067.8" stroke="#e3e3e3" stroke-width="2" stroke-dasharray="6 6"/>
<line x1="1276.5" y1="1017.8" x2="2176.6" y2="1017.8" stroke="#e3e3e3" stroke-width="2" stroke-dasharray="6 6"/>
<line x1="1276.5" y1="1217.8" x2="2176.6" y2="1217.8" stroke="#b9b9b9" stroke-width="2"/>
<line x1="1276.5" y1="1217.8" x2="1276.5" y2="1226.8" stroke="#b9b9b9" stroke-width="2"/>
<line x1="1376.5111111111112" y1="1217.8" x2="1376.5111111111112" y2="1226.8" stroke="#b9b9b9" stroke-width="2"/>
<line x1="1476.5222222222221" y1="1217.8" x2="1476.5222222222221" y2="1226.8" stroke="#b9b9b9" stroke-width="2"/>
<line x1="1576.5333333333333" y1="1217.8" x2="1576.5333333333333" y2="1226.8" stroke="#b9b9b9" stroke-width="2"/>
<line x1="1676.5444444444445" y1="1217.8" x2="1676.5444444444445" y2="1226.8" stroke="#b9b9b9" stroke-width="2"/>
<line x1="1776.5555555555557" y1="1217.8" x2="1776.5555555555557" y2="1226.8" stroke="#b9b9b9" stroke-width="2"/>
<line x1="1876.5666666666666" y1="1217.8" x2="1876.5666666666666" y2="1226.8" stroke="#b9b9b9" stroke-width="2"/>
<line x1="1976.5777777777776" y1="1217.8" x2="1976.5777777777776" y2="1226.8" stroke="#b9b9b9" stroke-width="2"/>
<line x1="2076.588888888889" y1="1217.8" x2="2076.588888888889" y2="1226.8" stroke="#b9b9b9" stroke-width="2"/>
<line x1="2176.6" y1="1217.8" x2="2176.6" y2="1226.8" stroke="#b9b9b9" stroke-width="2"/>
<text x="1258.5" y="1225.8" font-size="24" fill="#555" text-anchor="end" font-weight="normal">0</text>
<text x="1258.5" y="1175.8" font-size="24" fill="#555" text-anchor="end" font-weight="normal" textLength="88" lengthAdjust="spacing">500000</text>
<text x="1258.5" y="1125.8" font-size="24" fill="#555" text-anchor="end" font-weight="normal" textLength="102" lengthAdjust="spacing">1000000</text>
<text x="1258.5" y="1075.8" font-size="24" fill="#555" text-anchor="end" font-weight="normal" textLength="102" lengthAdjust="spacing">1500000</text>
<text x="1258.5" y="1025.8" font-size="24" fill="#555" text-anchor="end" font-weight="normal" textLength="102" lengthAdjust="spacing">2000000</text>
<text x="1276.5" y="1258.3" font-size="24" fill="#555" text-anchor="middle" font-weight="normal" textLength="63" lengthAdjust="spacing">18/02</text>
<text x="1376.5111111111112" y="1258.3" font-size="24" fill="#555" text-anchor="middle" font-weight="normal" textLength="63" lengthAdjust="spacing">19/02</text>
<text x="1476.5222222222221" y="1258.3" font-size="24" fill="#555" text-anchor="middle" font-weight="normal" textLength="63" lengthAdjust="spacing">20/02</text>
<text x="1576.5333333333333" y="1258.3" font-size="24" fill="#555" text-anchor="middle" font-weight="normal" textLength="63" lengthAdjust="spacing">21/02</text>
<text x="1676.5444444444445" y="1258.3" font-size="24" fill="#555" text-anchor="middle" font-weight="normal" textLength="63" lengthAdjust="spacing">22/02</text>
<text x="1776.5555555555557" y="1258.3" font-size="24" fill="#555" text-anchor="middle" font-weight="normal" textLength="63" lengthAdjust="spacing">23/02</text>
<text x="1876.5666666666666" y="1258.3" font-size="24" fill="#555" text-anchor="middle" font-weight="normal" textLength="63" lengthAdjust="spacing">24/02</text>
<text x="1976.5777777777776" y="1258.3" font-size="24" fill="#555" text-anchor="middle" font-weight="normal" textLength="63" lengthAdjust="spacing">25/02</text>
<text x="2076.588888888889" y="1258.3" font-size="24" fill="#555" text-anchor="middle" font-weight="normal" textLength="63" lengthAdjust="spacing">26/02</text>
<text x="2176.6" y="1258.3" font-size="24" fill="#555" text-anchor="middle" font-weight="normal" textLength="63" lengthAdjust="spacing">27/02</text>
<rect x="1274.5" y="1026.1" width="4" height="191.70000000000002" fill="#4088f2"/>
<rect x="1374.5111111111112" y="1079.3" width="4" height="138.5" fill="#4088f2"/>
<rect x="1474.5222222222221" y="1121.3" width="4" height="96.5" fill="#4088f2"/>
<rect x="1574.5333333333333" y="1078.3" width="4" height="139.5" fill="#4088f2"/>
<rect x="1674.5444444444445" y="1161.1" width="4" height="56.699999999999996" fill="#4088f2"/>
<rect x="1774.5555555555557" y="1094.0" width="4" height="123.8" fill="#4088f2"/>
<rect x="1874.5666666666666" y="1054.0" width="4" height="163.79999999999998" fill="#4088f2"/>
<rect x="1974.5777777777776" y="1064.9" width="4" height="152.89999999999998" fill="#4088f2"/>
<rect x="2074.588888888889" y="1049.2" width="4" height="168.6" fill="#4088f2"/>
<rect x="1641" y="981" width="16" height="16" fill="#4088f2"/>
<text x="1674" y="997" font-size="23.5" fill="#8f8f8f" text-anchor="start" font-weight="normal">还款金额</text>
<rect x="1276" y="1318.3" width="900.5" height="51.200000000000045" fill="#eef1f9" stroke="#d2dbee" stroke-width="1.5"/>
<rect x="1897.0344827586207" y="1318.3" width="279.4655172413793" height="51.200000000000045" fill="#e0e6f4"/>
<rect x="1268.5" y="1337.5" width="15" height="32" fill="#cbd5ea"/>
<rect x="1299.551724137931" y="1354.3" width="15" height="15.2" fill="#cbd5ea"/>
<rect x="1330.603448275862" y="1335.4" width="15" height="34.1" fill="#cbd5ea"/>
<rect x="1361.655172413793" y="1362.3" width="15" height="7.2" fill="#cbd5ea"/>
<rect x="1392.7068965517242" y="1331.2" width="15" height="38.3" fill="#cbd5ea"/>
<rect x="1423.7586206896551" y="1344.1" width="15" height="25.4" fill="#cbd5ea"/>
<rect x="1454.8103448275863" y="1320.2" width="15" height="49.3" fill="#cbd5ea"/>
<rect x="1485.8620689655172" y="1359.8" width="15" height="9.7" fill="#cbd5ea"/>
<rect x="1516.9137931034484" y="1348.3" width="15" height="21.2" fill="#cbd5ea"/>
<rect x="1547.9655172413793" y="1354.7" width="15" height="14.8" fill="#cbd5ea"/>
<rect x="1579.0172413793102" y="1345.2" width="15" height="24.3" fill="#cbd5ea"/>
<rect x="1610.0689655172414" y="1332.6" width="15" height="36.9" fill="#cbd5ea"/>
<rect x="1641.1206896551726" y="1353.5" width="15" height="16" fill="#cbd5ea"/>
<rect x="1672.1724137931035" y="1359.4" width="15" height="10.1" fill="#cbd5ea"/>
<rect x="1703.2241379310344" y="1339.2" width="15" height="30.3" fill="#cbd5ea"/>
<rect x="1734.2758620689656" y="1348.1" width="15" height="21.4" fill="#cbd5ea"/>
<rect x="1765.3275862068965" y="1322.2" width="15" height="47.3" fill="#cbd5ea"/>
<rect x="1796.3793103448274" y="1332.3" width="15" height="37.2" fill="#cbd5ea"/>
<rect x="1827.4310344827586" y="1349.2" width="15" height="20.3" fill="#cbd5ea"/>
<rect x="1858.4827586206898" y="1352.6" width="15" height="16.9" fill="#cbd5ea"/>
<rect x="1889.5344827586207" y="1336.8" width="15" height="32.7" fill="#cbd5ea"/>
<rect x="1920.5862068965516" y="1346.1" width="15" height="23.4" fill="#cbd5ea"/>
<rect x="1951.6379310344828" y="1353.2" width="15" height="16.3" fill="#cbd5ea"/>
<rect x="1982.689655172414" y="1346.1" width="15" height="23.4" fill="#cbd5ea"/>
<rect x="2013.7413793103449" y="1360.3" width="15" height="9.2" fill="#cbd5ea"/>
<rect x="2044.7931034482758" y="1348.6" width="15" height="20.9" fill="#cbd5ea"/>
<rect x="2075.844827586207" y="1341.7" width="15" height="27.8" fill="#cbd5ea"/>
<rect x="2106.8965517241377" y="1343.8" width="15" height="25.7" fill="#cbd5ea"/>
<rect x="2137.948275862069" y="1340.9" width="15" height="28.6" fill="#cbd5ea"/>
<line x1="1897.0344827586207" y1="1318.3" x2="1897.0344827586207" y2="1369.5" stroke="#acb6cc" stroke-width="2"/>
<rect x="1892.3344827586207" y="1331.7" width="9.4" height="24.2" rx="4.2" fill="#a9b2c6"/>
<rect x="1893.5344827586207" y="1336.7" width="2.4" height="14.2" fill="#e9ecf4"/>
<rect x="1898.1344827586206" y="1336.7" width="2.4" height="14.2" fill="#e9ecf4"/>
<line x1="2176.5" y1="1318.3" x2="2176.5" y2="1369.5" stroke="#acb6cc" stroke-width="2"/>
<rect x="2171.8" y="1331.7" width="9.4" height="24.2" rx="4.2" fill="#a9b2c6"/>
<rect x="2173.0" y="1336.7" width="2.4" height="14.2" fill="#e9ecf4"/>
<rect x="2177.6" y="1336.7" width="2.4" height="14.2" fill="#e9ecf4"/>
<text x="1881.0344827586207" y="1351.4" font-size="22" fill="#444" text-anchor="end" font-weight="normal" textLength="57" lengthAdjust="spacing">18/02</text>
<text x="2191.5" y="1351.4" font-size="22" fill="#444" text-anchor="start" font-weight="normal" textLength="59" lengthAdjust="spacing">27/02</text>
<text x="81" y="1645" font-size="26" fill="#262626" text-anchor="start" font-weight="normal" textLength="231" lengthAdjust="spacing" stroke="#262626" stroke-width="0.6">LoanMart 进件转化</text>
<text x="163" y="1745" font-size="32" fill="#262626" text-anchor="start" font-weight="bold">简件推送</text>
<text x="773" y="1739" font-size="28" fill="#999" text-anchor="start" font-weight="normal" textLength="33" lengthAdjust="spacing">0%</text>
<text x="1002" y="1745" font-size="32" fill="#262626" text-anchor="start" font-weight="bold">提交通过</text>
<text x="1611" y="1739" font-size="28" fill="#999" text-anchor="start" font-weight="normal" textLength="33" lengthAdjust="spacing">0%</text>
<text x="1837" y="1745" font-size="32" fill="#262626" text-anchor="start" font-weight="bold">审批通过</text>
<text x="179" y="761" font-size="27.5" fill="#666" text-anchor="start" font-weight="normal">申请笔数</text>
<text x="296.5" y="760.5" font-size="27" fill="#666" text-anchor="middle" font-weight="normal">:</text>
<text x="318" y="761" font-size="28" fill="#333" text-anchor="start" font-weight="normal">5</text>
<text x="510" y="761" font-size="27.5" fill="#666" text-anchor="start" font-weight="normal">放款笔数</text>
<text x="627.5" y="760.5" font-size="27" fill="#666" text-anchor="middle" font-weight="normal">:</text>
<text x="649" y="761" font-size="28" fill="#333" text-anchor="start" font-weight="normal" textLength="207" lengthAdjust="spacing">5(首贷0/ 复贷5)</text>
<text x="179" y="823" font-size="27.5" fill="#666" text-anchor="start" font-weight="normal">申请笔数</text>
<text x="296.5" y="822.5" font-size="27" fill="#666" text-anchor="middle" font-weight="normal">:</text>
<text x="318" y="823" font-size="28" fill="#333" text-anchor="start" font-weight="normal">0</text>
<text x="510" y="823" font-size="27.5" fill="#666" text-anchor="start" font-weight="normal">放款笔数</text>
<text x="627.5" y="822.5" font-size="27" fill="#666" text-anchor="middle" font-weight="normal">:</text>
<text x="649" y="823" font-size="28" fill="#333" text-anchor="start" font-weight="normal" textLength="207" lengthAdjust="spacing">0(首贷0/ 复贷0)</text>
<text x="1302" y="761" font-size="27.5" fill="#666" text-anchor="start" font-weight="normal">放款金额</text>
<text x="1419.5" y="760.5" font-size="27" fill="#666" text-anchor="middle" font-weight="normal">:</text>
<text x="1441" y="761" font-size="28" fill="#333" text-anchor="start" font-weight="normal" textLength="613" lengthAdjust="spacing">UGX617760(首贷UGX0.00/ 复贷UGX617760.00)</text>
<text x="1302" y="823" font-size="27.5" fill="#666" text-anchor="start" font-weight="normal">放款金额</text>
<text x="1419.5" y="822.5" font-size="27" fill="#666" text-anchor="middle" font-weight="normal">:</text>
<text x="1441" y="823" font-size="28" fill="#333" text-anchor="start" font-weight="normal" textLength="381" lengthAdjust="spacing">UGX0(首贷UGX0/ 复贷UGX0)</text>
<text x="178" y="1437" font-size="27.5" fill="#666" text-anchor="start" font-weight="normal">到期笔数</text>
<text x="295.5" y="1436.5" font-size="27" fill="#666" text-anchor="middle" font-weight="normal">:</text>
<text x="317" y="1437" font-size="28" fill="#333" text-anchor="start" font-weight="normal">10</text>
<text x="510" y="1437" font-size="27.5" fill="#666" text-anchor="start" font-weight="normal">还款笔数</text>
<text x="627.5" y="1436.5" font-size="27" fill="#666" text-anchor="middle" font-weight="normal">:</text>
<text x="649" y="1437" font-size="28" fill="#333" text-anchor="start" font-weight="normal" textLength="201" lengthAdjust="spacing">8(首贷0/复贷8)</text>
<text x="178" y="1499" font-size="27.5" fill="#666" text-anchor="start" font-weight="normal">到期笔数</text>
<text x="295.5" y="1498.5" font-size="27" fill="#666" text-anchor="middle" font-weight="normal">:</text>
<text x="317" y="1499" font-size="28" fill="#333" text-anchor="start" font-weight="normal">14</text>
<text x="510" y="1499" font-size="27.5" fill="#666" text-anchor="start" font-weight="normal">还款笔数</text>
<text x="627.5" y="1498.5" font-size="27" fill="#666" text-anchor="middle" font-weight="normal">:</text>
<text x="649" y="1499" font-size="28" fill="#333" text-anchor="start" font-weight="normal" textLength="201" lengthAdjust="spacing">0(首贷0/复贷0)</text>
<text x="1302" y="1437" font-size="27.5" fill="#666" text-anchor="start" font-weight="normal">还款金额</text>
<text x="1419.5" y="1436.5" font-size="27" fill="#666" text-anchor="middle" font-weight="normal">:</text>
<text x="1441" y="1437" font-size="28" fill="#333" text-anchor="start" font-weight="normal" textLength="718" lengthAdjust="spacing">UGX1690000(首贷UGX15000.00/ 复贷UGX1675000.00)</text>
<text x="1302" y="1499" font-size="27.5" fill="#666" text-anchor="start" font-weight="normal">还款金额</text>
<text x="1419.5" y="1498.5" font-size="27" fill="#666" text-anchor="middle" font-weight="normal">:</text>
<text x="1441" y="1499" font-size="28" fill="#333" text-anchor="start" font-weight="normal" textLength="381" lengthAdjust="spacing">UGX0(首贷UGX0/ 复贷UGX0)</text>
</svg></body></html>
